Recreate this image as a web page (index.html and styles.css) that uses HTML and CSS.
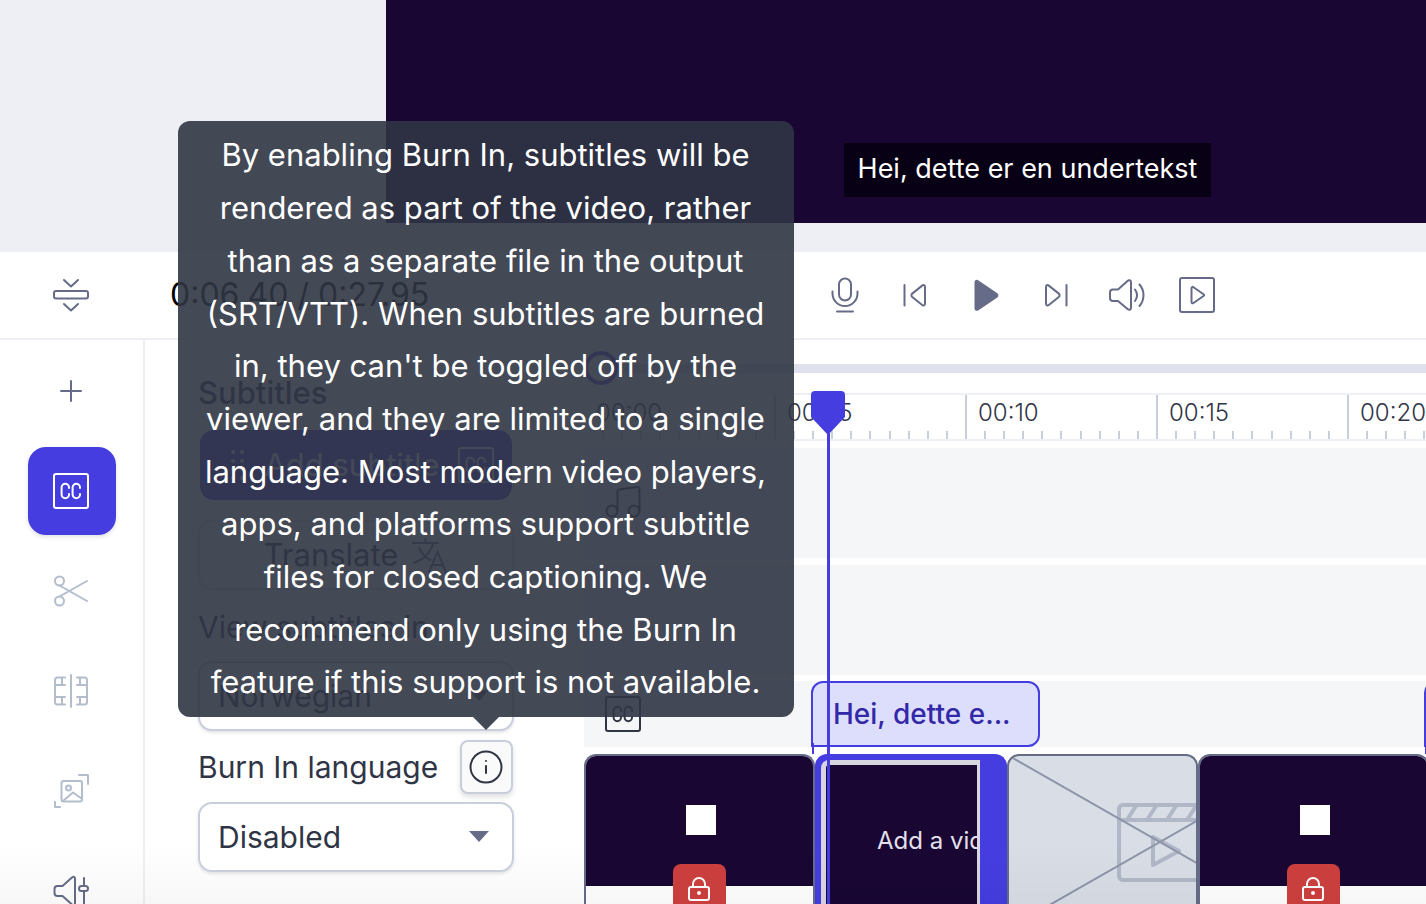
FILE: index.html
```
<!DOCTYPE html>
<html lang="en">

<head>
    <meta charset="utf-8">
    <title>Video editor</title>
    <link rel="stylesheet" href="styles.css">
</head>

<body>
    <svg class="defs" aria-hidden="true">
        <symbol id="cc" viewBox="0 0 36 36">
            <rect x="1" y="1" width="34" height="34" rx="2" />
            <path d="M16 15v-.5a3.700 3.700 0 0 0-7.400 0v7a3.700 3.700 0 0 0 7.400 0V21M27 15v-.5a3.700 3.700 0 0 0-7.400 0v7a3.700 3.700 0 0 0 7.400 0V21" />
        </symbol>
        <symbol id="lock" viewBox="0 0 24 26">
            <rect x="2" y="11" width="20" height="13" rx="2" />
            <path d="M6 11V8a6 6 0 0 1 12 0v3" />
            <circle cx="12" cy="17" r="1" />
        </symbol>
    </svg>

    <section class="preview">
        <div class="video">
            <p class="caption">Hei, dette er en undertekst</p>
        </div>
    </section>

    <header class="toolbar">
        <button class="tool collapse" aria-label="Resize timeline">
            <svg class="icon" viewBox="0 0 36 36"><path d="M11 3l7 6.500 7-6.500M11 27l7 6.500 7-6.500" /><rect x="1" y="14" width="34" height="7.500" rx="2" /></svg>
        </button>
        <div class="time">0:06.40 / 0:27.95</div>
        <div class="transport">
            <button class="tool" aria-label="Record">
                <svg class="icon" viewBox="0 0 36 36"><rect x="12" y="1.500" width="12" height="22" rx="6" /><path d="M5.500 14.500v2a12.500 12.500 0 0 0 25 0v-2M10 34.500h16" /></svg>
            </button>
            <button class="tool" aria-label="Previous">
                <svg class="icon" viewBox="0 0 36 36"><path d="M7.500 8v20.500M28 10v16.500c0 1.800-1.500 2.500-2.800 1.500l-10-8c-1-.8-1-2.600 0-3.400l10-8c1.300-1 2.800-.4 2.800 1.400z" /></svg>
            </button>
            <button class="tool" aria-label="Play">
                <svg class="icon filled" viewBox="0 0 36 36"><path d="M6.500 5.500c0-2.300 2-3.400 4-2.100l18.500 12.500c1.900 1.300 1.900 3.600 0 4.900L10.500 33.300c-2 1.300-4 .2-4-2.100z" /></svg>
            </button>
            <button class="tool" aria-label="Next">
                <svg class="icon" viewBox="0 0 36 36"><path d="M28.500 8v20.500M8 10v16.500c0 1.800 1.500 2.500 2.800 1.500l10-8c1-.8 1-2.600 0-3.400l-10-8C9.500 7.600 8 8.200 8 10z" /></svg>
            </button>
            <button class="tool" aria-label="Volume">
                <svg class="icon" viewBox="0 0 36 36"><path d="M1 15.500c0-2 1-3 3-3h5L18.500 4c1.500-1.300 3.500-.8 3.500 1v26c0 1.800-2 2.300-3.500 1L9 24H4c-2 0-3-1-3-3zM26 12.500c2.600 3.400 2.600 7.800 0 11.500M30.500 7.500c5.300 6 5.300 15.500 0 21.500" /></svg>
            </button>
            <button class="tool" aria-label="Preview">
                <svg class="icon" viewBox="0 0 36 36"><rect x="1" y="1" width="34" height="34" rx="2" /><path d="M12.500 11.500v13.500c0 1.300 1 1.700 2 1l10-7c.8-.6.8-1.200 0-1.800l-10-7c-1-.7-2-.2-2 1.300z" /></svg>
            </button>
        </div>
    </header>

    <main class="editor">
        <nav class="sidebar">
            <button class="side" aria-label="Add">
                <svg class="icon" viewBox="0 0 36 36"><path d="M18 8v20M8 18h20" /></svg>
            </button>
            <button class="side active" aria-label="Subtitles">
                <svg class="icon"><use href="#cc" /></svg>
            </button>
            <button class="side off" aria-label="Trim">
                <svg class="icon" viewBox="0 0 36 36"><circle cx="6.500" cy="8" r="4.500" /><circle cx="6.500" cy="28" r="4.500" /><path d="M6.500 12.500L34 28M6.500 23.500L34 8" /></svg>
            </button>
            <button class="side off" aria-label="Split">
                <svg class="icon" viewBox="0 0 36 36"><path d="M12 4.500H4.500a2.500 2.500 0 0 0-2.500 2.500v22a2.500 2.500 0 0 0 2.500 2.500H12M2 12h10M2 24h10M9 4.500V12M9 24v7.500M18 2v32M24 4.500h7.500a2.500 2.500 0 0 1 2.500 2.500v22a2.500 2.500 0 0 1-2.500 2.500H24M34 12H24M34 24H24M27 4.500V12M27 24v7.500" /></svg>
            </button>
            <button class="side off" aria-label="Resize image">
                <svg class="icon" viewBox="0 0 36 36"><path d="M26 2h9v9M2 29v5h5M10.500 27.500l9.500-8 8.500 6" /><rect x="8.500" y="8" width="20.500" height="20.500" rx="2" /><circle cx="15.500" cy="15" r="2.500" /></svg>
            </button>
            <button class="side" aria-label="Audio levels">
                <svg class="icon" viewBox="0 0 36 36"><path d="M1.500 16c0-2 1-3 3-3h5L19 4.500c1.500-1.300 3-.8 3 1v25c0 1.800-1.500 2.300-3 1L9.500 23h-5c-2 0-3-1-3-3zM31 5v8M31 18v13" /><rect x="26" y="13" width="9" height="5" rx="2.500" /></svg>
            </button>
        </nav>

        <section class="panel">
            <h2 class="title">Subtitles</h2>
            <button class="add">
                <svg class="dots" viewBox="0 0 16 32"><path d="M3 3h.1M12 3h.1M3 12h.1M12 12h.1M3 20h.1M12 20h.1M3 29h.1M12 29h.1" /></svg>
                <span>Add subtitle</span>
                <svg class="icon"><use href="#cc" /></svg>
            </button>
            <button class="translate">
                <span>Translate</span>
                <svg class="icon" viewBox="0 0 36 36"><path d="M1 6h25M13.500 2v4M21 6c-2 10-9 16-19 20M7 11c3 6 6 9 11 12M17 35l8.500-20L34 35M20 28h11" /></svg>
            </button>
            <label class="label" for="view">View subtitles in</label>
            <div class="dropdown">
                <select id="view">
                    <option>Norwegian</option>
                </select>
            </div>
            <div class="row">
                <label class="label" for="burn">Burn In language</label>
                <div class="hint">
                    <button class="info" aria-label="About Burn In" aria-describedby="tip">
                        <svg class="icon" viewBox="0 0 36 36"><circle cx="18" cy="18" r="15.500" /><path d="M18 17v7M18 12v.1" /></svg>
                    </button>
                    <div class="tooltip" id="tip" role="tooltip">By enabling Burn In, subtitles will be rendered as part of the video, rather than as a separate file in the output (SRT/VTT). When subtitles are burned in, they can't be toggled off by the viewer, and they are limited to a single language. Most modern video players, apps, and platforms support subtitle files for closed captioning. We recommend only using the Burn In feature if this support is not available.</div>
                </div>
            </div>
            <div class="dropdown">
                <select id="burn">
                    <option>Disabled</option>
                </select>
            </div>
        </section>

        <section class="timeline">
            <input class="zoom" type="range" min="0" max="100" value="0" aria-label="Timeline zoom">
            <div class="ruler">
                <div class="mark"><span>00:00</span><div class="ticks"><i></i><i></i><i></i><i></i><i></i><i></i><i></i><i></i><i></i></div></div>
                <div class="mark"><span>00:05</span><div class="ticks"><i></i><i></i><i></i><i></i><i></i><i></i><i></i><i></i><i></i></div></div>
                <div class="mark"><span>00:10</span><div class="ticks"><i></i><i></i><i></i><i></i><i></i><i></i><i></i><i></i><i></i></div></div>
                <div class="mark"><span>00:15</span><div class="ticks"><i></i><i></i><i></i><i></i><i></i><i></i><i></i><i></i><i></i></div></div>
                <div class="mark"><span>00:20</span><div class="ticks"><i></i><i></i><i></i><i></i><i></i><i></i><i></i><i></i><i></i></div></div>
            </div>
            <div class="track">
                <svg class="icon" viewBox="0 0 36 36"><circle cx="7" cy="26" r="5.500" /><circle cx="29" cy="26" r="5.500" /><path d="M12.500 26V7c0-1.500.8-2.300 2-2.500L32 2c1.500-.2 2.500.5 2.500 2v22" /></svg>
            </div>
            <div class="track"></div>
            <div class="track subs">
                <svg class="icon"><use href="#cc" /></svg>
                <button class="sub">Hei, dette e...</button>
                <button class="sub next" aria-label="Next subtitle"></button>
            </div>
            <div class="clips">
                <div class="clip locked">
                    <div class="thumb"><div class="square"></div></div>
                    <div class="lock"><svg class="lock-icon"><use href="#lock" /></svg></div>
                </div>
                <div class="clip selected">
                    <div class="frame">Add a video</div>
                </div>
                <div class="clip empty">
                    <svg class="placeholder" viewBox="0 0 300 172">
                        <g class="film">
                            <rect x="110" y="49" width="120" height="75" rx="4" />
                            <path d="M110 64h120M118 64l9-14M138 64l9-14M158 64l9-14M178 64l9-14M144 81v28l26-14z" />
                        </g>
                        <path d="M2 1l298 170M2 171L300 1" />
                    </svg>
                </div>
                <div class="clip locked">
                    <div class="thumb"><div class="square"></div></div>
                    <div class="lock"><svg class="lock-icon"><use href="#lock" /></svg></div>
                </div>
            </div>
            <div class="playhead">
                <svg class="handle" viewBox="0 0 34 44"><path d="M4 0h26q4 0 4 4v22L17 44 0 26V4q0-4 4-4z" /></svg>
            </div>
        </section>
    </main>
    <div class="fade"></div>
</body>

</html>
```
FILE: styles.css
```
* {
    box-sizing: border-box
}

body {
    margin: 0;
    height: 100vh;
    display: flex;
    flex-direction: column;
    overflow: hidden;
    background: #fff;
    color: #303546;
    font-family: Inter, "Liberation Sans", sans-serif;
    font-size: 30px;
    line-height: 40px
}

button,
select {
    margin: 0;
    padding: 0;
    border: 0;
    background: none;
    color: inherit;
    font: inherit;
    cursor: pointer
}

.defs {
    position: absolute;
    width: 0;
    height: 0
}

.icon {
    display: block;
    flex: none;
    width: 36px;
    height: 36px;
    fill: none;
    stroke: currentColor;
    stroke-width: 2;
    stroke-linecap: round;
    stroke-linejoin: round
}

.filled {
    fill: currentColor;
    stroke: none
}

/* preview */
.preview {
    flex: none;
    display: flex;
    padding: 0 0 29px 386px;
    overflow: hidden;
    background: #eeeff4
}

.video {
    flex: none;
    display: flex;
    align-items: flex-end;
    justify-content: center;
    width: 1283px;
    height: 223px;
    padding-bottom: 26px;
    background: #190633
}

.caption {
    margin: 0;
    padding: 6px 14px 8px;
    background: #080014;
    color: #fff;
    font-size: 27px
}

/* toolbar */
.toolbar {
    flex: none;
    display: flex;
    align-items: center;
    height: 88px;
    border-bottom: 2px solid #eeeff4;
    color: #666c87
}

.tool {
    display: flex;
    justify-content: center;
    width: 70px
}

.collapse {
    width: 142px;
    flex: none
}

.time {
    flex: 0 0 668px;
    padding-left: 28px;
    color: #000;
    font-size: 32px
}

.transport {
    flex: 0 0 422px;
    display: flex;
    justify-content: space-between
}

/* editor */
.editor {
    flex: 1;
    min-height: 0;
    display: flex
}

.sidebar {
    flex: none;
    display: flex;
    flex-direction: column;
    gap: 12px;
    padding: 7px 27px 0 28px;
    border-right: 2px solid #eeeff4;
    color: #666c87
}

.side {
    flex: none;
    display: flex;
    align-items: center;
    justify-content: center;
    width: 88px;
    height: 88px;
    padding-right: 2px;
    border-radius: 18px
}

.active {
    background: #453de0;
    color: #fff;
    box-shadow: 0 2px 4px rgba(48, 53, 70, .15)
}

.off {
    color: #b4bdcc
}

.panel {
    position: relative;
    z-index: 2;
    flex: none;
    display: flex;
    flex-direction: column;
    width: 439px;
    padding: 33px 70px 0 53px
}

.title {
    margin: 0 0 17px;
    font-size: 31px;
    font-weight: 500
}

.add {
    display: flex;
    align-items: center;
    justify-content: space-between;
    height: 70px;
    margin: 0 2px 20px;
    padding: 0 18px 0 30px;
    border-radius: 14px;
    background: #453de0;
    color: #fff;
    font-size: 31px
}

.dots {
    width: 16px;
    height: 32px;
    stroke: currentColor;
    stroke-width: 4;
    stroke-linecap: round
}

.translate {
    display: flex;
    align-items: center;
    justify-content: center;
    gap: 14px;
    height: 70px;
    margin-bottom: 17px;
    border: 2px solid #dfe2ea;
    border-radius: 14px;
    font-size: 31px
}

.translate .icon {
    color: #666c87
}

.dropdown {
    position: relative;
    margin-top: 14px
}

.dropdown::after {
    content: "";
    position: absolute;
    right: 25px;
    top: 29px;
    width: 20px;
    height: 11px;
    background: #666c87;
    clip-path: polygon(0 0, 100% 0, 50% 100%);
    pointer-events: none
}

.dropdown select {
    display: block;
    appearance: none;
    width: 100%;
    height: 70px;
    padding: 0 50px 0 18px;
    border: 2px solid #c8cedb;
    border-radius: 14px;
    background: #fff;
    box-shadow: 0 2px 3px rgba(48, 53, 70, .12)
}

.row {
    display: flex;
    align-items: center;
    justify-content: space-between;
    margin-top: 9px
}

.row + .dropdown {
    margin-top: 8px
}

.hint {
    position: relative;
    margin-right: 1px
}

.info {
    display: flex;
    align-items: center;
    justify-content: center;
    width: 53px;
    height: 54px;
    padding-right: 2px;
    border: 2px solid #c8cedb;
    border-radius: 8px;
    background: #fafafa;
    box-shadow: 0 3px 5px rgba(48, 53, 70, .15)
}

.tooltip {
    position: absolute;
    left: 50%;
    bottom: calc(100% + 23px);
    width: 616px;
    margin-left: -309px;
    padding: 8px 26px;
    border-radius: 12px;
    background: rgba(48, 53, 68, .9);
    color: #fff;
    font-size: 31px;
    line-height: 1.7;
    text-align: center
}

.tooltip::after {
    content: "";
    position: absolute;
    left: 50%;
    top: 100%;
    margin-left: -13px;
    border: 13px solid transparent;
    border-top-color: rgba(48, 53, 68, .9);
    border-bottom: 0
}

/* timeline */
.timeline {
    position: relative;
    flex: 1;
    min-width: 0;
    display: flex;
    flex-direction: column;
    overflow: hidden
}

.zoom {
    flex: none;
    appearance: none;
    height: 34px;
    margin: 11px 0 8px;
    background: linear-gradient(#dfe2ec, #dfe2ec) 17px 13px / 100% 9px no-repeat
}

.zoom::-webkit-slider-thumb {
    appearance: none;
    width: 34px;
    height: 34px;
    border: 4px solid #453de0;
    border-radius: 50%;
    background: #fff
}

.ruler {
    flex: none;
    display: flex;
    height: 48px;
    margin: 0 0 7px -1px;
    border-top: 2px solid #eeeff4;
    border-bottom: 2px solid #eeeff4;
    font-size: 24px;
    font-weight: 300;
    line-height: 36px
}

.mark {
    flex: 0 0 191px;
    display: flex;
    flex-direction: column;
    justify-content: space-between;
    border-left: 2px solid #c8cedb
}

.mark:first-child {
    border-color: transparent
}

.mark span {
    padding-left: 11px
}

.ticks {
    display: flex;
    justify-content: space-evenly
}

.ticks i {
    width: 2px;
    height: 8px;
    background: #c8cedb
}

.track {
    flex: none;
    display: flex;
    align-items: center;
    height: 110px;
    margin-bottom: 7px;
    padding-left: 21px;
    background: #f5f6f8
}

.track + .track {
    margin-bottom: 6px
}

.track.subs {
    position: relative;
    height: 66px;
    margin-bottom: 7px
}

.sub {
    position: absolute;
    left: 227px;
    top: 0;
    width: 229px;
    height: 66px;
    padding-left: 20px;
    border: 2px solid #453de0;
    border-radius: 12px 12px 12px 0;
    background: #dddefb;
    color: #3328a8;
    font-size: 28px;
    font-weight: 500;
    text-align: left;
    white-space: nowrap
}

.sub::after {
    content: "";
    position: absolute;
    left: -1px;
    top: 60px;
    width: 2px;
    height: 11px;
    background: #453de0
}

.next {
    left: 840px
}

.clips {
    flex: 1;
    min-height: 150px;
    display: flex
}

.clip {
    flex: none;
    position: relative;
    overflow: hidden;
    border: 2px solid #666c87;
    border-bottom: 0;
    border-radius: 12px 12px 0 0
}

.locked {
    width: 231px
}

.thumb {
    display: flex;
    align-items: center;
    justify-content: center;
    height: 130px;
    padding: 0 0 2px 2px;
    background: #190633
}

.square {
    width: 30px;
    height: 30px;
    background: #fff
}

.lock {
    position: absolute;
    left: 50%;
    top: 108px;
    display: flex;
    justify-content: center;
    width: 53px;
    height: 53px;
    margin-left: -27px;
    padding-top: 12px;
    border-radius: 8px;
    background: #cd403e;
    color: #fff
}

.lock-icon {
    width: 24px;
    height: 26px;
    fill: none;
    stroke: currentColor;
    stroke-width: 2
}

.selected {
    width: 192px;
    padding: 4px 25px 0 4px;
    border-color: #453de0;
    background: #453de0
}

.frame {
    height: 100%;
    padding: 56px 0 0 51px;
    overflow: hidden;
    border: solid #d8d6e0;
    border-width: 5px 3px 0 5px;
    border-top-left-radius: 8px;
    background: #190633;
    color: #e4e0ea;
    font-size: 24px;
    white-space: nowrap
}

.empty {
    width: 191px;
    background: #d9dde5
}

.placeholder {
    display: block;
    width: 300px;
    height: 172px;
    fill: none;
    stroke: #8d95a9;
    stroke-width: 2
}

.film {
    stroke: #b0b7c6;
    stroke-width: 4;
    stroke-linejoin: round
}

.playhead {
    position: absolute;
    left: 243px;
    top: 51px;
    bottom: 0;
    width: 3px;
    background: #453de0
}

.handle {
    position: absolute;
    left: -16px;
    top: 0;
    width: 34px;
    height: 44px;
    fill: #453de0
}

.fade {
    position: absolute;
    left: 0;
    right: 0;
    bottom: 0;
    height: 60px;
    background: linear-gradient(transparent, rgba(0, 0, 0, .03));
    pointer-events: none
}
```
